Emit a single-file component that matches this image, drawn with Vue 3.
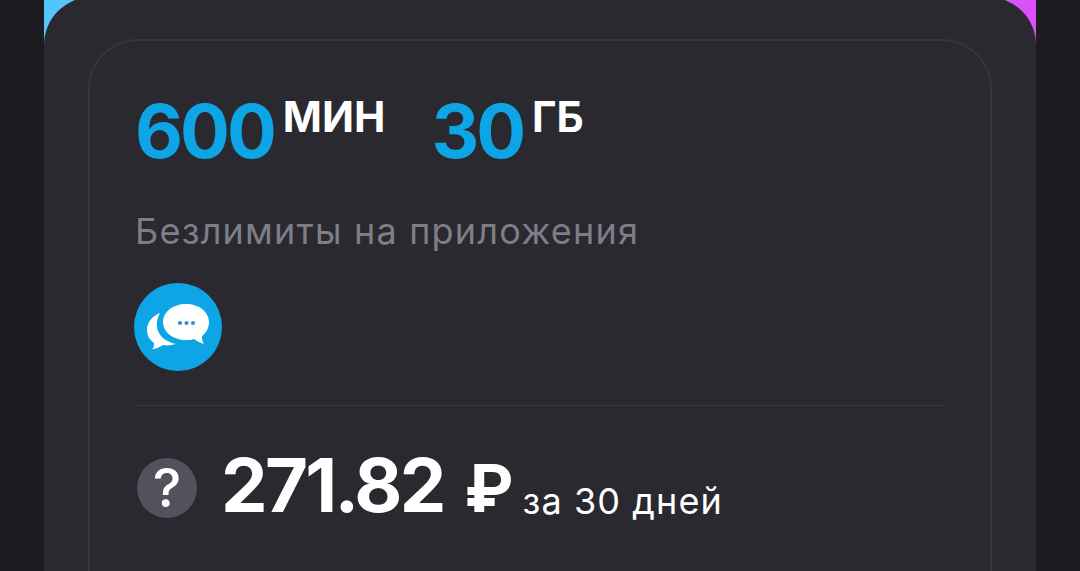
<template>
  <div class="page">
    <div class="shell">
      <div class="sheet">
        <div class="tariff-card">
          <div class="amounts">
            <div class="amount">
              <span class="amount-value">600</span>
              <span class="amount-unit">МИН</span>
            </div>
            <div class="amount">
              <span class="amount-value">30</span>
              <span class="amount-unit">ГБ</span>
            </div>
          </div>

          <div class="apps-title">Безлимиты на приложения</div>

          <div class="app-icon">
            <svg width="88" height="88" viewBox="0 0 88 88">
              <path
                fill="#fff"
                d="M26 30C18 33 13 40 13 47C13 53 16 57 20 60C20 63 20 65 18 66C22 66 26 64 29 62C33 63 37 62 42 61C33 59 27 55 24 48C22 42 23 35 26 30Z"
              />
              <path
                fill="#fff"
                d="M52 21C39 21 29 29 29 39C29 49 39 57 52 57C55 57 58 57 60 56C63 58 66 60 70 61C68 58 68 56 68 53C72 50 75 45 75 39C75 29 65 21 52 21Z"
              />
              <circle cx="46" cy="40" r="2.1" fill="#3a8fc0" />
              <circle cx="52.5" cy="40" r="2.1" fill="#3a8fc0" />
              <circle cx="59" cy="40" r="2.1" fill="#3a8fc0" />
            </svg>
          </div>

          <div class="divider"></div>

          <div class="price-row">
            <div class="help-icon">?</div>
            <span class="price">271.82 <span class="currency">₽</span></span>
            <span class="period">за 30 дней</span>
          </div>
        </div>
      </div>
    </div>
  </div>
</template>

<script setup>
</script>

<style>
html,
body {
  margin: 0;
  background: #1c1c20;
}
</style>

<style scoped>
.page {
  height: 571px;
  overflow: hidden;
  background: #1c1c20;
  font-family: Inter, "Noto Sans", sans-serif;
  padding: 0 44px;
}

.shell {
  height: 571px;
  overflow: hidden;
  background: linear-gradient(90deg, #52c6fb 0%, #8f8cfb 50%, #dc4ffb 100%);
}

.sheet {
  height: 574px;
  margin-top: -3px;
  box-sizing: border-box;
  padding: 42px 44px 0;
  background: #29292f;
  border-radius: 48px 48px 0 0;
}

.tariff-card {
  height: 600px;
  box-sizing: border-box;
  padding: 46px 45px 0;
  border: 2px solid #35353e;
  border-radius: 50px;
}

.amounts {
  display: flex;
  gap: 46px;
  height: 80px;
}

.amount {
  display: flex;
  align-items: flex-start;
  gap: 9px;
}

.amount-value {
  margin-top: 4px;
  font-size: 74px;
  line-height: 80px;
  font-weight: 700;
  letter-spacing: -3px;
  color: #0ea5e6;
}

.amount-unit {
  font-size: 42px;
  line-height: 60px;
  font-weight: 700;
  color: #fff;
}

.apps-title {
  margin-top: 42px;
  font-size: 36px;
  line-height: 44px;
  letter-spacing: 1.2px;
  color: #7e7e88;
}

.app-icon {
  width: 88px;
  height: 88px;
  margin-top: 30px;
  margin-left: -1px;
  border-radius: 50%;
  background: #0ea5e6;
}

.divider {
  height: 1px;
  margin-top: 34px;
  background: #3a3a42;
}

.price-row {
  display: flex;
  align-items: baseline;
  margin-top: 44px;
}

.help-icon {
  width: 60px;
  height: 60px;
  margin: 2px 24px 0 2px;
  align-self: center;
  border-radius: 50%;
  background: #52525e;
  color: #fff;
  font-size: 54px;
  line-height: 60px;
  font-weight: 500;
  text-align: center;
}

.price {
  font-size: 74px;
  line-height: 70px;
  font-weight: 700;
  letter-spacing: -2.7px;
  color: #fff;
}

.currency {
  margin-left: 6px;
  font-size: 66px;
  letter-spacing: 0;
}

.period {
  align-self: flex-end;
  margin-left: 9px;
  font-size: 36px;
  line-height: 44px;
  letter-spacing: 1.1px;
  color: #fff;
}
</style>
